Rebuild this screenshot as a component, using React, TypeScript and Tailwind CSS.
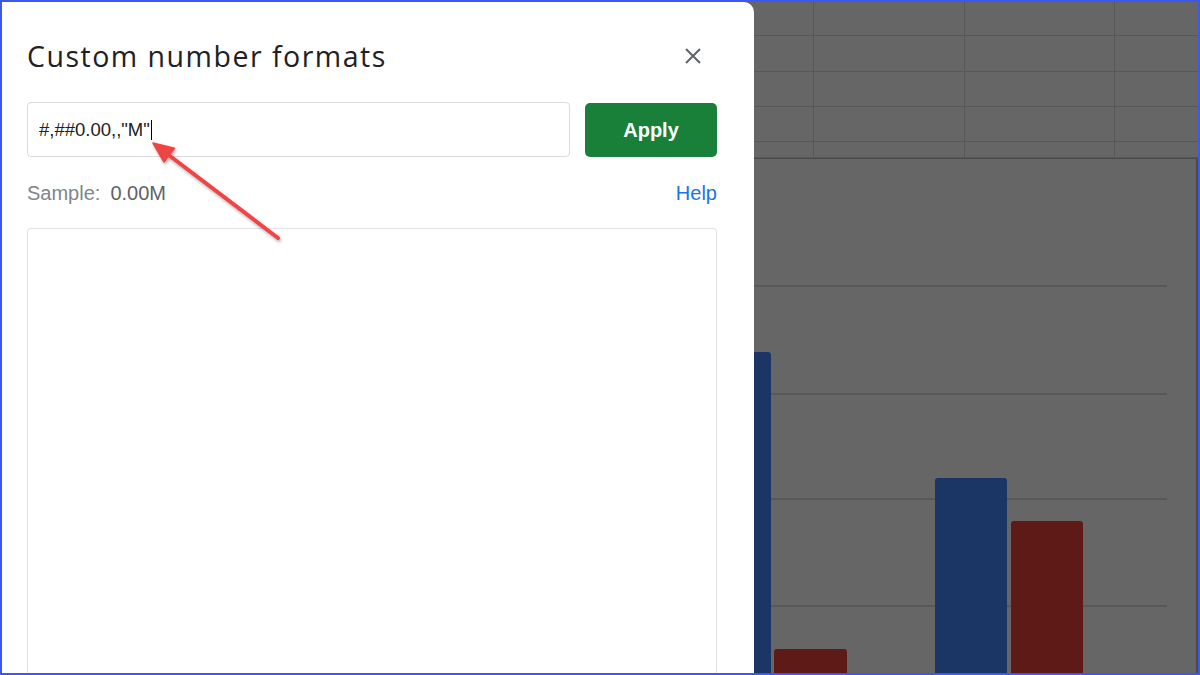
export default function App() {
  const rows = [34, 37, 35, 36, 16];
  return (
    <div className="relative w-[1200px] h-[675px] box-border border-2 border-[#3d57f2] flex overflow-hidden bg-[#666666]">
      {/* Dialog */}
      <div className="w-[752px] h-full bg-white rounded-tr-[10px] pl-[25px] pr-[37px] pt-[36px] flex flex-col shrink-0">
        <div className="flex items-center justify-between h-[36px]">
          <h1 className="text-[28.5px] leading-[36px] text-[#202124] tracking-[1.5px]" style={{ fontFamily: '"Open Sans", sans-serif' }}>
            Custom number formats
          </h1>
          <div className="w-6 h-6 mr-[12px] flex items-center justify-center">
            <svg width="16" height="16" viewBox="0 0 16 16">
              <path d="M1 1L15 15M15 1L1 15" stroke="#5f6368" strokeWidth="2" />
            </svg>
          </div>
        </div>

        <div className="flex items-center gap-[15px] mt-[28px]" style={{ fontFamily: '"Liberation Sans", Arial, sans-serif' }}>
          <div className="flex-1 h-[55px] border border-[#dadce0] rounded-[4px] flex items-center pl-[11px] text-[18.5px] text-[#202124]">
            <span>#,##0.00,,"M"</span>
            <span className="w-[1.5px] h-[20px] bg-black ml-[1px]" />
          </div>
          <div className="w-[132px] h-[54px] bg-[#188038] rounded-[5px] flex items-center justify-center text-white font-bold text-[20px]">
            Apply
          </div>
        </div>

        <div className="flex items-center justify-between mt-[18px] h-[36px] text-[20px]" style={{ fontFamily: '"Liberation Sans", Arial, sans-serif' }}>
          <div className="flex gap-[10px]">
            <span className="text-[#80868b]">Sample:</span>
            <span className="text-[#5f6368]">0.00M</span>
          </div>
          <span className="text-[#1a73e8]">Help</span>
        </div>

        <div className="mt-[17px] flex-1 border border-b-0 border-[#e3e3e3] rounded-t-[4px]" />
      </div>

      {/* Sheet behind overlay */}
      <div className="flex-1 flex flex-col">
        {rows.map((h, i) => (
          <div key={i} className="flex border-b border-[#585858]" style={{ height: h }}>
            <div className="w-[60px] border-r border-[#585858]" />
            <div className="w-[151px] border-r border-[#585858]" />
            <div className="w-[150px] border-r border-[#585858]" />
            <div className="flex-1" />
          </div>
        ))}
        <div className="flex-1 border-t border-r-2 border-[#4a4a4a]">
          <svg width="442" height="514" viewBox="0 0 442 514">
            {[127, 235, 340, 447].map((y) => (
              <line key={y} x1="0" x2="413" y1={y} y2={y} stroke="#555555" strokeWidth="1.5" />
            ))}
            <path d="M0 193H14a3 3 0 0 1 3 3V520H0Z" fill="#1b3564" />
            <path d="M23 490H90a3 3 0 0 1 3 3V520H20V493a3 3 0 0 1 3-3Z" fill="#5d1a17" />
            <path d="M184 319H250a3 3 0 0 1 3 3V520H181V322a3 3 0 0 1 3-3Z" fill="#1b3564" />
            <path d="M260 362H326a3 3 0 0 1 3 3V520H257V365a3 3 0 0 1 3-3Z" fill="#5d1a17" />
          </svg>
        </div>
      </div>

      {/* Red annotation arrow */}
      <svg className="absolute left-[-2px] top-[-2px] pointer-events-none" width="1200" height="675" viewBox="0 0 1200 675">
        <defs>
          <filter id="sh" x="-20%" y="-20%" width="140%" height="140%">
            <feDropShadow dx="1" dy="2" stdDeviation="1.5" floodColor="#000" floodOpacity="0.3" />
          </filter>
        </defs>
        <g filter="url(#sh)">
          <line x1="278" y1="238" x2="166" y2="153" stroke="#ef4444" strokeWidth="4" strokeLinecap="round" />
          <path d="M153 143L174.5 148.2L164 162Z" fill="#ef4444" stroke="#ef4444" strokeWidth="1.5" strokeLinejoin="round" />
        </g>
      </svg>
    </div>
  );
}
